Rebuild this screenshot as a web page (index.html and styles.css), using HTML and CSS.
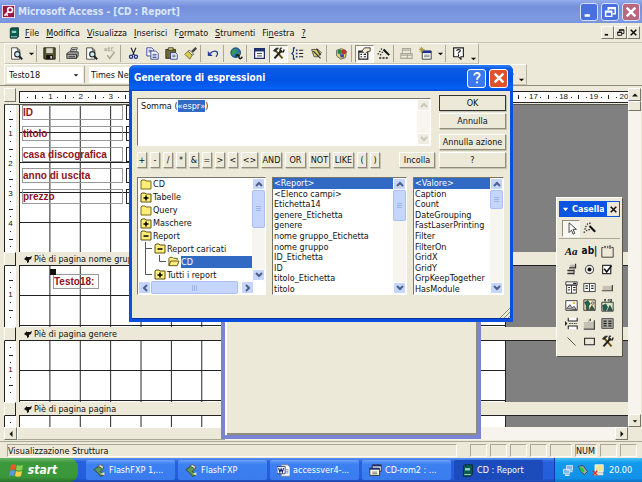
FILE: index.html
```
<!DOCTYPE html>
<html lang="it">
<head>
    <meta charset="UTF-8">
    <meta name="viewport" content="width=device-width, initial-scale=1.0">
    <title>Microsoft Access - [CD : Report]</title>
    <link rel="stylesheet" href="styles.css">
</head>
<body>
    <svg class="sprite" aria-hidden="true">
        <symbol id="i-key" viewBox="0 0 16 16"><rect width="16" height="16" fill="#fff"/><rect x="1" y="1" width="14" height="14" fill="#9c1a42"/><path d="M3 13l5-5M5 11l2 2" stroke="#fff" stroke-width="2"/><circle cx="10" cy="6" r="3" fill="none" stroke="#fff" stroke-width="2"/></symbol>
        <symbol id="i-book" viewBox="0 0 16 16"><path d="M3 2l2-1h9v12l-2 2H3z" fill="#0b5a50" stroke="#032b28"/><path d="M5 5h6v3H5z" fill="#8fd0c0"/><path d="M4 13h8" stroke="#d8e8e0"/></symbol>
        <symbol id="i-preview" viewBox="0 0 16 16"><path d="M2 1h7l3 3v11H2z" fill="#fff" stroke="#333"/><path d="M9 1v3h3" fill="none" stroke="#333"/><circle cx="9" cy="9" r="3.3" fill="#c9ecf2" stroke="#222" stroke-width="1.3"/><path d="M11 11l4 4" stroke="#222" stroke-width="2.4"/></symbol>
        <symbol id="i-save" viewBox="0 0 16 16"><path d="M1 1h14v14H2l-1-1z" fill="#56582e" stroke="#111"/><path d="M4 1.500h8v6H4z" fill="#d8d8c8"/><path d="M4 10h8v5H4z" fill="#111"/><path d="M9 11h2v3H9z" fill="#ddd"/></symbol>
        <symbol id="i-print" viewBox="0 0 16 16"><path d="M5 6l2-5h7l-2 5" fill="#fff" stroke="#222"/><path d="M1 8l3-2h11v5l-2 3H1z" fill="#aaa" stroke="#222"/><path d="M1 9h12v5M3 12h8M7 3h5M6 5h5" fill="none" stroke="#222"/></symbol>
        <symbol id="i-spell" viewBox="0 0 16 16"><path d="M1 5V2h2v3M1 4h2M5 5V1h2l-1 2 1 2H5M12 1h-3v4h3" fill="none" stroke="#aaa79a"/><path d="M4 10l3 4 6-8" fill="none" stroke="#aaa79a" stroke-width="2"/></symbol>
        <symbol id="i-cut" viewBox="0 0 16 16"><path d="M5 1l4 9M11 1L7 10" fill="none" stroke="#222" stroke-width="1.400"/><circle cx="5" cy="12" r="2" fill="none" stroke="#1c2f8c" stroke-width="1.500"/><circle cx="11" cy="12" r="2" fill="none" stroke="#1c2f8c" stroke-width="1.500"/></symbol>
        <symbol id="i-copy" viewBox="0 0 16 16"><path d="M1 1h6l2 2v8H1z" fill="#fff" stroke="#1c2f8c"/><path d="M6 5h6l3 3v7H6z" fill="#fff" stroke="#1c2f8c"/><path d="M3 4h4M3 6h3M8 9h5M8 11h5M8 13h5" stroke="#1c2f8c"/></symbol>
        <symbol id="i-paste" viewBox="0 0 16 16"><path d="M1 3h12v11H1z" fill="#6f6a30" stroke="#222"/><path d="M4 1h6v3H4z" fill="#e8dc80" stroke="#222"/><path d="M7 7h6l2 2v6H7z" fill="#fff" stroke="#1c2f8c"/><path d="M9 10h4M9 12h4" stroke="#1c2f8c"/></symbol>
        <symbol id="i-brush" viewBox="0 0 16 16"><path d="M15 1l-5 5" stroke="#444" stroke-width="3"/><path d="M7 4l5 5-2 1-5-5z" fill="#fff" stroke="#444"/><path d="M5 5l5 5-3 5-6-6z" fill="#d8cc50" stroke="#666020"/></symbol>
        <symbol id="i-undo" viewBox="0 0 16 16"><path d="M4 8c3-4 9-4 9 0 0 2-1 3-2 4" fill="none" stroke="#2a3ea0" stroke-width="1.600"/><path d="M1 5v6h6z" fill="#2a3ea0"/></symbol>
        <symbol id="i-globe" viewBox="0 0 16 16"><circle cx="7" cy="7" r="6" fill="#2878b8" stroke="#123a6a"/><path d="M3 4l4-2 2 3-3 3-2 3-2-4zM9 8l3-1-1 4z" fill="#3a9a4a"/><path d="M7 12c1-3 4-3 4 0s3 3 4 0" fill="none" stroke="#222" stroke-width="2"/></symbol>
        <symbol id="i-fields" viewBox="0 0 16 16"><path d="M2 2h12v12H2z" fill="#fff" stroke="#1c2f6c" stroke-width="1.500"/><path d="M2 4h12" stroke="#1c2f6c" stroke-width="3"/><path d="M5 8h6M5 11h6" stroke="#222"/></symbol>
        <symbol id="i-tools" viewBox="0 0 16 16"><path d="M3 3l10 11" stroke="#6a5010" stroke-width="2.400"/><path d="M12 4L3 14" stroke="#222" stroke-width="2.400"/><path d="M1 5l4-4h4L4 6z" fill="#333"/><path d="M10 2v4h4l1-3M10 2l2-1" fill="none" stroke="#222" stroke-width="1.700"/></symbol>
        <symbol id="i-group" viewBox="0 0 16 16"><path d="M5 1H3v5L1 8l2 2v5h2" fill="none" stroke="#1c2f8c" stroke-width="1.400"/><path d="M6 3h2v2H6zM6 7h2v2H6zM6 11h2v2H6z" fill="#1c2f8c"/><path d="M10 4h5M10 8h5M10 12h5" stroke="#222" stroke-width="1.400"/></symbol>
        <symbol id="i-format" viewBox="0 0 16 16"><path d="M2 3h8l4 4-4 5H5z" fill="#d8cc70" stroke="#444"/><path d="M4 5l6 6M8 2l5 8M8 9l5 5" stroke="#333" stroke-width="1.500"/></symbol>
        <symbol id="i-code" viewBox="0 0 16 16"><path d="M2 4l6-2 6 3-1 8-6 2-5-4z" fill="#e8d060" stroke="#555"/><circle cx="6" cy="6" r="3" fill="#2c8a4a"/><circle cx="11" cy="6" r="3" fill="#c33030"/><path d="M6 9h5v4H7z" fill="#2850b0"/></symbol>
        <symbol id="i-props" viewBox="0 0 16 16"><path d="M1 5h11v10H1z" fill="#fff" stroke="#222" stroke-width="1.500"/><path d="M1 6h8" stroke="#222" stroke-width="2"/><path d="M3 9h2M7 9h3M3 12h2M7 12h3" stroke="#222" stroke-width="1.400"/><path d="M5 5l3-4h7v4l-4 1-2 2" fill="#f2ead0" stroke="#222"/></symbol>
        <symbol id="i-wand" viewBox="0 0 16 16"><path d="M8 5l7 7" stroke="#111" stroke-width="2.600"/><path d="M5 2h1v1H5zM8 1h1v1H8zM3 5h1v1H3zM2 8h1v1H2zM4 10h1v1H4zM7 9h1v1H7zM1 12h1v1H1z" fill="#222" stroke="#222" stroke-width=".6"/></symbol>
        <symbol id="i-wand-dots" viewBox="0 0 16 16"><path d="M8 3l7 7" stroke="#111" stroke-width="2.600"/><path d="M5 2h1v1H5zM3 5h1v1H3zM6 6h1v1H6zM1 8h1v1H1zM4 9h1v1H4zM3 13h2v1H3zM7 13h2v1H7zM11 13h2v1h-2z" fill="#222" stroke="#222" stroke-width=".6"/></symbol>
        <symbol id="i-db" viewBox="0 0 16 16"><path d="M3 2h10v6H3zM1 8h8v6H1zM9 8h6v6H9zM3 4h10M1 10h14" fill="none" stroke="#aaa79a" stroke-width="1.300"/></symbol>
        <symbol id="i-new" viewBox="0 0 16 16"><path d="M4 5h11v10H4z" fill="#fff" stroke="#222"/><path d="M4 6h11" stroke="#1c2f8c" stroke-width="3"/><path d="M6 10h7M6 12h7" stroke="#666"/><path d="M3 0v7M0 3h7M1 1l4 5M5 1L1 6" stroke="#a89020"/></symbol>
        <symbol id="i-help" viewBox="0 0 16 16"><path d="M2 1h12v11h-3v3l-3-3H2z" fill="#fff" stroke="#222" stroke-width="1.400"/><path d="M6 5c0-3 5-2 4 0L8 7v1M8 9v2" fill="none" stroke="#222" stroke-width="1.500"/></symbol>
        <symbol id="i-down" viewBox="0 0 8 8"><path d="M1 3h6L4 6z" fill="#111"/></symbol>
        <symbol id="i-up" viewBox="0 0 8 8"><path d="M0 6h8L4 2z" fill="#111"/></symbol>
        <symbol id="i-left" viewBox="0 0 8 8"><path d="M6 0v8L2 4z" fill="#111"/></symbol>
        <symbol id="i-right" viewBox="0 0 8 8"><path d="M2 0v8l4-4z" fill="#111"/></symbol>
        <symbol id="c-up" viewBox="0 0 8 8"><path d="M1 6l3-3 3 3" fill="none" stroke="currentColor" stroke-width="2"/></symbol>
        <symbol id="c-down" viewBox="0 0 8 8"><path d="M1 2l3 3 3-3" fill="none" stroke="currentColor" stroke-width="2"/></symbol>
        <symbol id="c-left" viewBox="0 0 8 8"><path d="M6 1L3 4l3 3" fill="none" stroke="currentColor" stroke-width="2"/></symbol>
        <symbol id="c-right" viewBox="0 0 8 8"><path d="M2 1l3 3-3 3" fill="none" stroke="currentColor" stroke-width="2"/></symbol>
        <symbol id="w-min" viewBox="0 0 16 16"><path d="M3 12h6" stroke="currentColor" stroke-width="3"/></symbol>
        <symbol id="w-max" viewBox="0 0 16 16"><path d="M6 6V3h8v7h-3M6 4h8" fill="none" stroke="currentColor" stroke-width="1.700"/><path d="M3 7h7v6H3zM3 8h7" fill="none" stroke="currentColor" stroke-width="1.700"/></symbol>
        <symbol id="w-close" viewBox="0 0 16 16"><path d="M3 3l10 10M13 3L3 13" stroke="currentColor" stroke-width="2.800"/></symbol>
        <symbol id="i-section" viewBox="0 0 8 8"><path d="M0 4l3-3v1h3l2-1-1 3-2 1v2l-2 1V6z" fill="#111"/></symbol>
        <symbol id="f-closed" viewBox="0 0 12 11"><path d="M1 2l1-1h3l1 1h5v8H1z" fill="#ffef7a" stroke="#7a6a10"/></symbol>
        <symbol id="f-plus" viewBox="0 0 12 11"><path d="M1 2l1-1h3l1 1h5v8H1z" fill="#ffef7a" stroke="#5a5010"/><path d="M6 3.500v5M3.500 6h5" stroke="#000" stroke-width="1.500"/></symbol>
        <symbol id="f-minus" viewBox="0 0 12 11"><path d="M1 2l1-1h3l1 1h5v8H1z" fill="#ffef7a" stroke="#5a5010"/><path d="M3.500 6h5" stroke="#000" stroke-width="1.500"/></symbol>
        <symbol id="f-open" viewBox="0 0 13 11"><path d="M1 10V2l1-1h3l1 1h4v2M1 10l2-5h9l-2 5z" fill="#ffef7a" stroke="#5a5010"/></symbol>
        <symbol id="t-tee" viewBox="0 0 14 13"><path d="M5.500 0v13M5.500 6.500H12" fill="none" stroke="#555"/></symbol>
        <symbol id="t-line" viewBox="0 0 14 13"><path d="M5.500 0v13" stroke="#555"/></symbol>
        <symbol id="t-corner" viewBox="0 0 14 13"><path d="M5.500 0v6.500H12" fill="none" stroke="#555"/></symbol>
        <symbol id="i-fxp" viewBox="0 0 16 16"><circle cx="9" cy="5" r="4" fill="#d9ead0" stroke="#445"/><path d="M1 7l6-4 5 3-3 3 4 5-4 1-4-5z" fill="#5d9a52" stroke="#2c3d2c"/><path d="M9 12l5-2v4z" fill="#e8e0b0"/></symbol>
        <symbol id="i-word" viewBox="0 0 16 16"><path d="M5 1h8l3 3v11H5z" fill="#fff" stroke="#778"/><path d="M0 3h10v9H0z" fill="#fff" stroke="#182a7a"/><path d="M2 5l1.500 5L5 6l1.500 4L8 5" fill="none" stroke="#182a7a" stroke-width="1.500"/><path d="M11 7h3M11 9h3M11 11h3" stroke="#778"/></symbol>
        <symbol id="i-forms" viewBox="0 0 16 16"><path d="M4 1h11v8H4z" fill="#fff" stroke="#222"/><path d="M4 2h11" stroke="#182a7a" stroke-width="2"/><path d="M1 5h12v9H1z" fill="#f8f5e4" stroke="#222"/><path d="M1 6h12" stroke="#182a7a" stroke-width="2"/><path d="M4 10h6M4 12h6" stroke="#666"/></symbol>
    </svg>

    <div class="app">
        <header class="titlebar">
            <svg class="icon"><use href="#i-key"/></svg>
            <h1>Microsoft Access - [CD : Report]</h1>
            <div class="window-buttons">
                <button class="xp-button" aria-label="Riduci a icona"><svg><use href="#w-min"/></svg></button>
                <button class="xp-button" aria-label="Ripristina"><svg><use href="#w-max"/></svg></button>
                <button class="xp-button close" aria-label="Chiudi"><svg><use href="#w-close"/></svg></button>
            </div>
        </header>

        <nav class="menubar">
            <svg class="icon"><use href="#i-book"/></svg>
            <button><u>F</u>ile</button>
            <button><u>M</u>odifica</button>
            <button><u>V</u>isualizza</button>
            <button><u>I</u>nserisci</button>
            <button>F<u>o</u>rmato</button>
            <button><u>S</u>trumenti</button>
            <button>Fi<u>n</u>estra</button>
            <button><u>?</u></button>
            <div class="child-buttons">
                <button aria-label="Riduci finestra"><svg><use href="#w-min"/></svg></button>
                <button aria-label="Ripristina finestra"><svg><use href="#w-max"/></svg></button>
                <button aria-label="Chiudi finestra"><svg><use href="#w-close"/></svg></button>
            </div>
        </nav>

        <div class="toolbar">
            <div class="band">
                <button class="tool" aria-label="Visualizza"><svg><use href="#i-preview"/></svg></button>
                <button class="tool-arrow" aria-label="Altre visualizzazioni"><svg><use href="#i-down"/></svg></button>
                <span class="sep"></span>
                <button class="tool" aria-label="Salva"><svg><use href="#i-save"/></svg></button>
                <span class="sep"></span>
                <button class="tool" aria-label="Stampa"><svg><use href="#i-print"/></svg></button>
                <button class="tool" aria-label="Anteprima"><svg><use href="#i-preview"/></svg></button>
                <button class="tool" aria-label="Controllo ortografia"><svg><use href="#i-spell"/></svg></button>
                <span class="sep"></span>
                <button class="tool" aria-label="Taglia"><svg><use href="#i-cut"/></svg></button>
                <button class="tool" aria-label="Copia"><svg><use href="#i-copy"/></svg></button>
                <button class="tool" aria-label="Incolla appunti"><svg><use href="#i-paste"/></svg></button>
                <button class="tool" aria-label="Copia formato"><svg><use href="#i-brush"/></svg></button>
                <span class="sep"></span>
                <button class="tool" aria-label="Annulla modifica"><svg><use href="#i-undo"/></svg></button>
                <span class="sep"></span>
                <button class="tool" aria-label="Collegamento"><svg><use href="#i-globe"/></svg></button>
                <span class="sep"></span>
                <button class="tool" aria-label="Elenco campi"><svg><use href="#i-fields"/></svg></button>
                <button class="tool pressed" aria-label="Casella degli strumenti"><svg><use href="#i-tools"/></svg></button>
                <button class="tool" aria-label="Ordina e raggruppa"><svg><use href="#i-group"/></svg></button>
                <button class="tool" aria-label="Formattazione automatica"><svg><use href="#i-format"/></svg></button>
                <span class="sep wide"></span>
                <button class="tool" aria-label="Codice"><svg><use href="#i-code"/></svg></button>
                <span class="sep"></span>
                <button class="tool pressed" aria-label="Proprietà"><svg><use href="#i-props"/></svg></button>
                <button class="tool" aria-label="Genera"><svg><use href="#i-wand-dots"/></svg></button>
                <span class="sep"></span>
                <button class="tool" aria-label="Finestra database"><svg><use href="#i-db"/></svg></button>
                <button class="tool" aria-label="Nuovo oggetto"><svg><use href="#i-new"/></svg></button>
                <button class="tool-arrow" aria-label="Altri oggetti"><svg><use href="#i-down"/></svg></button>
                <span class="sep"></span>
                <button class="tool" aria-label="Guida"><svg><use href="#i-help"/></svg></button>
                <button class="tool-arrow low" aria-label="Opzioni barra"><svg><use href="#i-down"/></svg></button>
            </div>
        </div>

        <div class="toolbar">
            <div class="band format-band">
                <span class="combo"><select aria-label="Oggetto"><option>Testo18</option></select><svg><use href="#i-down"/></svg></span>
                <span class="sep"></span>
                <span class="combo font"><select aria-label="Tipo di carattere"><option>Times New Roman</option></select><svg><use href="#i-down"/></svg></span>
                <button class="tool-arrow push" aria-label="Effetto"><svg><use href="#i-down"/></svg></button>
                <button class="tool-arrow low" aria-label="Opzioni formato"><svg><use href="#i-down"/></svg></button>
            </div>
        </div>

        <main class="report">
            <div class="design">
                <div class="ruler-row">
                    <div class="corner"></div>
                    <div class="ruler" data-units="20"></div>
                </div>
                <div class="section first">
                    <div class="v-ruler" data-units="4"></div>
                    <div class="canvas">
                        <div class="page">
                            <div class="fields">
                                <div class="field"><span>ID</span><span></span></div>
                                <div class="field"><span>titolo</span><span></span></div>
                                <div class="field"><span>casa discografica</span><span></span></div>
                                <div class="field"><span>anno di uscita</span><span></span></div>
                                <div class="field"><span>prezzo</span><span></span></div>
                            </div>
                        </div>
                    </div>
                </div>
                <div class="section-bar"><i></i><h2><svg><use href="#i-section"/></svg>Piè di pagina nome gruppo</h2></div>
                <div class="section">
                    <div class="v-ruler" data-units="1"></div>
                    <div class="canvas">
                        <div class="page"><span class="new-field">Testo18:</span></div>
                    </div>
                </div>
                <div class="section-bar"><i></i><h2><svg><use href="#i-section"/></svg>Piè di pagina genere</h2></div>
                <div class="section">
                    <div class="v-ruler" data-units="1"></div>
                    <div class="canvas"><div class="page"></div></div>
                </div>
                <div class="section-bar"><i></i><h2><svg><use href="#i-section"/></svg>Piè di pagina pagina</h2></div>
                <div class="section last">
                    <div class="v-ruler" data-units="0"></div>
                    <div class="canvas"><div class="page"></div></div>
                </div>
                <div class="h-scroll">
                    <button aria-label="Scorri a sinistra"><svg><use href="#i-left"/></svg></button>
                    <span></span>
                    <button aria-label="Scorri a destra"><svg><use href="#i-right"/></svg></button>
                </div>
            </div>
            <div class="v-scroll">
                <button aria-label="Scorri in alto"><svg><use href="#i-up"/></svg></button>
                <span></span>
                <button aria-label="Scorri in basso"><svg><use href="#i-down"/></svg></button>
            </div>
        </main>

        <footer class="statusbar">
            <span class="message">Visualizzazione Struttura</span>
            <span class="pane"></span>
            <span class="pane"></span>
            <span class="pane"></span>
            <span class="pane"></span>
            <span class="pane num"></span>
            <span class="pane num">NUM</span>
            <span class="pane"></span>
            <span class="pane"></span>
        </footer>

        <div class="taskbar">
            <button class="start">
                <svg viewBox="0 0 16 16"><path d="M2 3c2-1 4-1 5 0L6 8c-1-1-3-1-5 0z" fill="#f0562a"/><path d="M8 3c2 1 4 1 6 0l-1 5c-2 1-4 1-6 0z" fill="#8cd050"/><path d="M1 9c2-1 4-1 5 0l-1 5c-1-1-3-1-5 0z" fill="#5a96f0"/><path d="M7 9c2 1 4 1 6 0l-1 5c-2 1-4 1-6 0z" fill="#fbd040"/></svg>
                start
            </button>
            <div class="tasks">
                <button><svg><use href="#i-fxp"/></svg>FlashFXP 1,...</button>
                <button><svg><use href="#i-fxp"/></svg>FlashFXP</button>
                <button><svg><use href="#i-word"/></svg>accessver4-...</button>
                <button><svg><use href="#i-forms"/></svg>CD-rom2 : ...</button>
                <button class="active"><svg><use href="#i-book"/></svg>CD : Report</button>
            </div>
            <div class="tray">
                <svg viewBox="0 0 16 16"><path d="M6 2h8v6H6zM2 7h8v6H2z" fill="#7fb8f4" stroke="#e4efff"/><path d="M4 15h6M11 10h3" stroke="#dfe8f8" stroke-width="2"/></svg>
                <svg viewBox="0 0 16 16"><path d="M2 3l6-1 6 8-4 4-5-4z" fill="#9aa8a8" stroke="#334"/><path d="M3 4l5 1 2 5-4 1z" fill="#2fc43a"/></svg>
                <svg viewBox="0 0 16 16"><path d="M4 1h11v9H4z" fill="#f6e49a" stroke="#fff"/><path d="M2 11h13v4H2z" fill="#e8e0c8"/><path d="M1 9l6 6M7 9l-6 6" stroke="#e03020" stroke-width="2"/></svg>
                <time>20.00</time>
            </div>
        </div>
    </div>

    <div class="back-window"></div>

    <div class="dialog" role="dialog" aria-labelledby="dialog-title">
        <div class="dialog-title">
            <h2 id="dialog-title">Generatore di espressioni</h2>
            <button class="xp-button" aria-label="Guida rapida"><svg viewBox="0 0 16 16"><path d="M5 5c0-4 7-3 6 0-.5 2-3 2-3 5M8 12v2" fill="none" stroke="#fff" stroke-width="2.200"/></svg></button>
            <button class="xp-button close" aria-label="Chiudi generatore"><svg><use href="#w-close"/></svg></button>
        </div>
        <div class="dialog-body">
            <div class="builder">
                <div class="editor">
                    <div class="expression">
                        <textarea id="expression" aria-label="Espressione" spellcheck="false">Somma («espr»)</textarea>
                        <div class="scroll disabled">
                            <button aria-label="Su" disabled><svg><use href="#c-up"/></svg></button>
                            <button aria-label="Giù" disabled><svg><use href="#c-down"/></svg></button>
                        </div>
                    </div>
                    <div class="operators">
                        <button>+</button>
                        <button>-</button>
                        <button>/</button>
                        <button>*</button>
                        <button>&amp;</button>
                        <button>=</button>
                        <button>&gt;</button>
                        <button>&lt;</button>
                        <button class="pair">&lt;&gt;</button>
                        <button class="word">AND</button>
                        <button class="word">OR</button>
                        <button class="word">NOT</button>
                        <button class="word">LIKE</button>
                        <button>(</button>
                        <button>)</button>
                        <button class="paste">Incolla</button>
                    </div>
                </div>
                <div class="commands">
                    <button class="default">OK</button>
                    <button>Annulla</button>
                    <button class="spaced">Annulla azione</button>
                    <button>?</button>
                </div>
            </div>

            <div class="lists">
                <div class="list tree-list">
                    <div class="list-main">
                        <ul class="tree" role="tree">
                            <li role="treeitem"><svg><use href="#f-closed"/></svg><span>CD</span></li>
                            <li role="treeitem"><svg><use href="#f-plus"/></svg><span>Tabelle</span></li>
                            <li role="treeitem"><svg><use href="#f-closed"/></svg><span>Query</span></li>
                            <li role="treeitem"><svg><use href="#f-plus"/></svg><span>Maschere</span></li>
                            <li role="treeitem"><svg><use href="#f-minus"/></svg><span>Report</span></li>
                            <li role="treeitem"><svg class="branch"><use href="#t-tee"/></svg><svg><use href="#f-minus"/></svg><span>Report caricati</span></li>
                            <li role="treeitem" aria-selected="true"><svg class="branch"><use href="#t-line"/></svg><svg class="branch"><use href="#t-corner"/></svg><svg><use href="#f-open"/></svg><span class="selected">CD</span></li>
                            <li role="treeitem"><svg class="branch"><use href="#t-corner"/></svg><svg><use href="#f-plus"/></svg><span>Tutti i report</span></li>
                        </ul>
                        <div class="scroll">
                            <button aria-label="Su"><svg><use href="#c-up"/></svg></button>
                            <i class="thumb long"></i>
                            <button aria-label="Giù"><svg><use href="#c-down"/></svg></button>
                        </div>
                    </div>
                    <div class="scroll horizontal">
                        <button aria-label="Sinistra"><svg><use href="#c-left"/></svg></button>
                        <i class="thumb"></i>
                        <button aria-label="Destra"><svg><use href="#c-right"/></svg></button>
                    </div>
                </div>
                <div class="list items-list">
                    <ul role="listbox" aria-label="Elementi">
                        <li role="option" class="selected">&lt;Report&gt;</li>
                        <li role="option">&lt;Elenco campi&gt;</li>
                        <li role="option">Etichetta14</li>
                        <li role="option">genere_Etichetta</li>
                        <li role="option">genere</li>
                        <li role="option">nome gruppo_Etichetta</li>
                        <li role="option">nome gruppo</li>
                        <li role="option">ID_Etichetta</li>
                        <li role="option">ID</li>
                        <li role="option">titolo_Etichetta</li>
                        <li role="option">titolo</li>
                    </ul>
                    <div class="scroll">
                        <button aria-label="Su"><svg><use href="#c-up"/></svg></button>
                        <i class="thumb medium"></i>
                        <button aria-label="Giù"><svg><use href="#c-down"/></svg></button>
                    </div>
                </div>
                <div class="list values-list">
                    <ul role="listbox" aria-label="Valori">
                        <li role="option" class="selected">&lt;Valore&gt;</li>
                        <li role="option">Caption</li>
                        <li role="option">Count</li>
                        <li role="option">DateGrouping</li>
                        <li role="option">FastLaserPrinting</li>
                        <li role="option">Filter</li>
                        <li role="option">FilterOn</li>
                        <li role="option">GridX</li>
                        <li role="option">GridY</li>
                        <li role="option">GrpKeepTogether</li>
                        <li role="option">HasModule</li>
                    </ul>
                    <div class="scroll">
                        <button aria-label="Su"><svg><use href="#c-up"/></svg></button>
                        <i class="thumb"></i>
                        <button aria-label="Giù"><svg><use href="#c-down"/></svg></button>
                    </div>
                </div>
            </div>
            <svg class="grip" viewBox="0 0 10 10"><path d="M0 10L10 0M4 10l6-6M8 10l2-2" stroke="#8f8c7c"/></svg>
        </div>
    </div>

    <div class="toolbox">
        <div class="toolbox-title">
            <svg viewBox="0 0 8 8"><path d="M1 2h6L4 6z" fill="#fff"/></svg>
            <h2>Casella degli strumenti</h2>
            <button aria-label="Chiudi casella"><svg><use href="#w-close"/></svg></button>
        </div>
        <div class="toolbox-modes">
            <button class="pressed" aria-label="Seleziona oggetti"><svg viewBox="0 0 16 16"><path d="M5 1v12l3-3 2 5 2-1-2-5h4z" fill="#fff" stroke="#222"/></svg></button>
            <button aria-label="Creazioni guidate"><svg><use href="#i-wand"/></svg></button>
        </div>
        <div class="toolbox-grid">
            <button class="glyph serif">Aa</button>
            <button class="glyph">ab|</button>
            <button aria-label="Gruppo di opzioni"><svg viewBox="0 0 16 16"><path d="M3 3H1v12h14V3h-2" fill="none" stroke="#222"/><path d="M4 1l2 3M6 1L4 4M8 1v3M10 1v3h2V1h-2" fill="none" stroke="#222" stroke-width=".8"/></svg></button>
            <button aria-label="Interruttore"><svg viewBox="0 0 16 16"><path d="M6 2h7v4H6zM3 9h7v4H3z" fill="#b8b5a6"/><path d="M13 1v5H5M11 8v6M3 9h9M3 13h8" fill="none" stroke="#333" stroke-width="1.500"/></svg></button>
            <button aria-label="Pulsante di opzione"><svg viewBox="0 0 16 16"><circle cx="8" cy="8" r="5" fill="#fff" stroke="#555" stroke-width="1.500"/><circle cx="8" cy="8" r="2.500" fill="#111"/></svg></button>
            <button aria-label="Casella di controllo"><svg viewBox="0 0 16 16"><path d="M2 3h10v10H2z" fill="#fff" stroke="#333" stroke-width="1.500"/><path d="M4 7l3 4 6-8" fill="none" stroke="#111" stroke-width="2"/></svg></button>
            <button aria-label="Casella combinata"><svg viewBox="0 0 16 16"><path d="M1 1h14v4H1zM2 5h12v10H2zM8 5v10" fill="#fff" stroke="#222"/><path d="M4 8h2M4 11h2M10 8h3M10 11h3M10 3h4" stroke="#222" stroke-width="1.500"/></svg></button>
            <button aria-label="Casella di riepilogo"><svg viewBox="0 0 16 16"><path d="M1 3h14v10H1zM8 3v10" fill="#fff" stroke="#222"/><path d="M3 6h3M3 9h3M10 6h3M10 9h3" stroke="#222" stroke-width="1.500"/></svg></button>
            <button aria-label="Pulsante di comando"><svg viewBox="0 0 16 16"><path d="M2 6h12v5H2z" fill="#c4c1b2"/><path d="M14 5v7H1" fill="none" stroke="#444" stroke-width="1.500"/></svg></button>
            <button aria-label="Immagine"><svg viewBox="0 0 16 16"><path d="M1 2h14v12H1z" fill="#fff" stroke="#222"/><path d="M2 12l4-5 3 4 2-2 3 4z" fill="#bbb" stroke="#333"/><circle cx="11" cy="5" r="1.500" fill="#ddc43a"/></svg></button>
            <button aria-label="Cornice oggetto non associato"><svg viewBox="0 0 16 16"><path d="M1 1h14v13H1z" fill="#eee8b8" stroke="#222"/><path d="M2 4l4-2 3 4-2 2v5H4V8zM8 13l3-5 3 5z" fill="#1c6658" stroke="#222" stroke-width=".7"/><circle cx="12" cy="5" r="1.500" fill="#fff" stroke="#444"/></svg></button>
            <button aria-label="Cornice oggetto associato"><svg viewBox="0 0 16 16"><path d="M1 4h14v11H1z" fill="#d8e4c8" stroke="#222"/><path d="M4 0l2 3M6 0L4 3M9 0v3M11 0h2v3h-2z" stroke="#222" fill="none"/><path d="M2 8l4-2 2 4-2 4H3zM8 14l3-6 3 6z" fill="#1c6658" stroke="#222" stroke-width=".7"/></svg></button>
            <button aria-label="Interruzione di pagina"><svg viewBox="0 0 16 16"><path d="M4 1v4h11V1M4 15v-4h11v4" fill="#fff" stroke="#222" stroke-width="1.300"/><path d="M5 8h10" stroke="#222" stroke-dasharray="2 1"/><path d="M0 5v6l3-3z" fill="#222"/></svg></button>
            <button aria-label="Struttura a schede"><svg viewBox="0 0 16 16"><path d="M1 6h5V3h3v3h5v8H1z" fill="#c4c1b2"/><path d="M14 4v11H1M9 2v3" fill="none" stroke="#444" stroke-width="1.500"/></svg></button>
            <button aria-label="Sottoreport"><svg viewBox="0 0 16 16"><path d="M1 2h14v12H1z" fill="#b0b0a8" stroke="#333"/><path d="M3 5h4M3 8h4M3 11h4M9 5h4M9 8h4M9 11h4" stroke="#222" stroke-width="1.600"/></svg></button>
            <button aria-label="Linea"><svg viewBox="0 0 16 16"><path d="M3 3l10 10" stroke="#333"/></svg></button>
            <button aria-label="Rettangolo"><svg viewBox="0 0 16 16"><path d="M2 4h12v8H2z" fill="none" stroke="#222" stroke-width="1.300"/></svg></button>
            <button aria-label="Altri controlli"><svg><use href="#i-tools"/></svg></button>
        </div>
    </div>

    <script>
        // Tacche dei righelli: tre segni e poi il numero, alla fine solo i segni
        const ticks = '<i class="dot"></i><i class="tick"></i><i class="dot"></i>';

        document.querySelectorAll('[data-units]').forEach(ruler => {
            const units = Number(ruler.dataset.units);
            for (let i = 1; i <= units + 1; i++) {
                const unit = document.createElement('div');
                unit.className = 'unit';
                unit.innerHTML = ticks + (i <= units ? '<b>' + i + '</b>' : '<b></b>');
                ruler.appendChild(unit);
            }
        });

        const expression = document.getElementById('expression');
        expression.focus();
        expression.setSelectionRange(7, 13);
    </script>
</body>
</html>
```
FILE: styles.css
```
* {
    box-sizing: border-box;
}

body {
    margin: 0;
    height: 100vh;
    overflow: hidden;
    position: relative;
    background: #ece9d8;
    color: #111;
    font-family: "DejaVu Sans Condensed", "DejaVu Sans", sans-serif;
    font-size: 9px;
    line-height: 12px;
}

h1, h2, ul {
    margin: 0;
    padding: 0;
    font-size: inherit;
    font-weight: normal;
    list-style: none;
}

button, select, textarea {
    font: inherit;
    color: inherit;
    margin: 0;
    padding: 0;
    border: 0;
    border-radius: 0;
    background: none;
}

button {
    display: flex;
    align-items: center;
    justify-content: center;
    flex: none;
    white-space: nowrap;
}

svg {
    flex: none;
    display: block;
}

.sprite {
    position: absolute;
    width: 0;
    height: 0;
}

.app {
    display: flex;
    flex-direction: column;
    height: 100%;
}

/* Title bar */
.titlebar {
    display: flex;
    align-items: center;
    flex: none;
    height: 23px;
    padding: 0 2px;
    gap: 3px;
    background: linear-gradient(#93aceb, #7590dc 30%, #7f9ae3 80%, #7894dd);
    color: #dce6fb;
}

.titlebar .icon {
    width: 13px;
    height: 13px;
}

.titlebar h1 {
    flex: 1;
    font-size: 10px;
    font-weight: bold;
}

.window-buttons {
    display: flex;
    gap: 3px;
}

.xp-button {
    width: 18px;
    height: 18px;
    border: 1px solid #d5e0fa;
    border-radius: 3px;
    background: #4a6fe0;
    color: #fff;
}

.xp-button svg {
    width: 14px;
    height: 14px;
}

.xp-button.close {
    background: #b9677c;
}

/* Menu and toolbars */
.menubar {
    display: flex;
    align-items: center;
    flex: none;
    height: 20px;
    padding: 0 2px 0 8px;
    gap: 7px;
    border-bottom: 1px solid #c9c5b4;
}

.menubar .icon {
    width: 12px;
    height: 12px;
    margin-right: -2px;
}

.child-buttons {
    display: flex;
    margin-left: auto;
}

.child-buttons button {
    width: 13px;
    height: 13px;
    border: 1px solid;
    border-color: #fff #77756a #77756a #fff;
}

.child-buttons svg {
    width: 9px;
    height: 9px;
}

.toolbar {
    flex: none;
    height: 21px;
    padding-left: 4px;
}

.band {
    display: inline-flex;
    align-items: center;
    height: 21px;
    padding-left: 2px;
    border: 1px solid;
    border-color: #fff #b5b2a2 #c9c5b4 #fff;
}

.tool {
    width: 19px;
    height: 18px;
}

.tool svg {
    width: 13px;
    height: 13px;
}

.tool-arrow {
    width: 10px;
    height: 18px;
}

.tool-arrow svg {
    width: 7px;
    height: 7px;
}

.tool-arrow.low {
    align-items: flex-end;
    padding-bottom: 1px;
}

.tool-arrow.push {
    margin-left: auto;
}

.pressed {
    background: #f8f7f1;
    border: 1px solid;
    border-color: #8f8c7c #fff #fff #8f8c7c;
}

.sep {
    width: 4px;
    height: 17px;
    border-left: 1px solid #aca899;
    border-right: 2px solid transparent;
}

.sep.wide {
    width: 6px;
}

.format-band {
    width: 82%;
}

.combo {
    display: flex;
    align-items: center;
    width: 76px;
    height: 16px;
    padding-right: 4px;
    background: #fff;
}

.combo.font {
    width: 110px;
}

.combo select {
    flex: 1;
    min-width: 0;
    padding-left: 2px;
    appearance: none;
    outline: 0;
}

.combo svg {
    width: 6px;
    height: 6px;
}

.format-band .sep {
    margin: 0 1px;
}

/* Report design area */
.report {
    display: flex;
    flex: 1;
    min-height: 0;
    padding: 2px 1px 1px 4px;
    border-top: 1px solid #8f8c7c;
}

.design {
    display: flex;
    flex-direction: column;
    flex: 1;
    min-width: 0;
}

.ruler-row {
    display: flex;
    flex: none;
    height: 17px;
    gap: 3px;
    border-bottom: 1px solid #55534a;
}

.corner {
    width: 12px;
    height: 14px;
    border: 1px solid;
    border-color: #fff #77756a #77756a #fff;
}

.ruler {
    display: flex;
    flex: 1;
    height: 12px;
    margin-top: 3px;
    padding-left: 4px;
    overflow: hidden;
    border: solid #222;
    border-width: 1px 0 1px 1px;
    background: #fff;
    font: 8px/10px "Liberation Sans", Arial, sans-serif;
}

.unit {
    display: flex;
    align-items: center;
    flex: 0 0 5%;
}

.unit > * {
    display: flex;
    flex: 1 1 0;
    align-items: center;
    justify-content: center;
    width: 0;
    font-weight: normal;
}

.unit .dot::before,
.unit .tick::before {
    content: "";
    width: 1px;
    height: 1px;
    background: #222;
}

.unit .tick::before {
    height: 4px;
}

.section {
    display: flex;
    flex: none;
    gap: 3px;
    height: 61px;
}

.section.first {
    height: 147px;
}

.section.last {
    flex: 1;
    height: auto;
    min-height: 0;
}

.v-ruler {
    width: 12px;
    padding-top: 3px;
    overflow: hidden;
    border-left: 1px solid #222;
    background: #fff;
    font: 8px/8px "Liberation Sans", Arial, sans-serif;
}

.v-ruler .unit {
    flex-direction: column;
    height: 30px;
}

.v-ruler .unit > * {
    width: auto;
    min-height: 0;
}

.v-ruler .tick::before {
    width: 4px;
    height: 1px;
}

.canvas {
    flex: 1;
    min-width: 0;
    background: #808080;
    border-left: 1px solid #222;
}

/* One grid square is a sixteenth of the page */
.page {
    width: 80%;
    height: 100%;
    background-color: #fff;
    background-image:
        linear-gradient(to left, #222 1px, transparent 1px),
        linear-gradient(to top, #222 1px, transparent 1px);
    background-size: calc(100% / 16) 30px;
}

.first .page {
    background-position: 0 -2px;
}

.fields {
    display: flex;
    flex-direction: column;
    gap: 6px;
    padding-left: 2px;
}

.field {
    display: flex;
    gap: 3px;
}

.field span,
.new-field {
    width: 101px;
    height: 15px;
    border: 1px solid #999;
    color: #8e1220;
    font: bold 10px/13px "Liberation Sans", Arial, sans-serif;
}

.field span + span {
    border-color: #222;
}

.new-field {
    display: block;
    position: relative;
    left: 33px;
    top: 8px;
    width: 46px;
}

.new-field::before {
    content: "";
    position: absolute;
    left: -4px;
    top: -6px;
    width: 6px;
    height: 6px;
    background: #111;
}

.section-bar {
    display: flex;
    flex: none;
    gap: 3px;
    height: 14px;
}

.section-bar i {
    width: 12px;
    border: 1px solid;
    border-color: #fff #222 #222 #fff;
}

.section-bar h2 {
    display: flex;
    align-items: center;
    flex: 1;
    gap: 2px;
    padding-left: 5px;
    border-bottom: 1px solid #222;
}

.section-bar svg {
    width: 8px;
    height: 8px;
}

.h-scroll,
.v-scroll {
    display: flex;
    flex: none;
    background: #f6f4ec;
}

.h-scroll {
    height: 13px;
}

.h-scroll span {
    width: 208px;
    margin-right: auto;
    border: 1px solid;
    border-color: #fff #aca899 #aca899 #fff;
    background: #ece9d8;
}

.v-scroll {
    flex-direction: column;
    width: 13px;
    margin-bottom: 13px;
}

.v-scroll span {
    height: 10px;
    margin-bottom: auto;
    border: 1px solid;
    border-color: #fff #77756a #77756a #fff;
    background: #ece9d8;
}

.h-scroll button,
.v-scroll button {
    width: 13px;
    height: 13px;
    border: 1px solid;
    border-color: #fff #77756a #77756a #fff;
    background: #ece9d8;
}

.h-scroll svg,
.v-scroll svg {
    width: 6px;
    height: 6px;
}

/* Status bar */
.statusbar {
    display: flex;
    align-items: center;
    flex: none;
    height: 17px;
    gap: 3px;
    padding: 0 5px 0 7px;
    border-top: 1px solid #aca899;
}

.message,
.pane {
    height: 13px;
    border: 1px solid;
    border-color: #aca899 #fff #fff #aca899;
}

.message {
    flex: 1;
    margin-right: 10px;
}

.pane {
    width: 17px;
}

.pane.num {
    width: 22px;
}

/* Task bar */
.taskbar {
    display: flex;
    flex: none;
    height: 24px;
    background: linear-gradient(#5b95f5, #2761dc 15%, #245ddb 85%, #1b46a8);
    color: #fff;
}

.start {
    width: 78px;
    gap: 3px;
    padding-right: 12px;
    border-radius: 0 9px 9px 0;
    background: linear-gradient(#6cb566, #3b983b 20%, #3a973a 80%, #2a702a);
    font: italic bold 12px/18px "DejaVu Sans Condensed", sans-serif;
}

.start svg {
    width: 16px;
    height: 16px;
}

.tasks {
    display: flex;
    flex: 1;
    gap: 3px;
    padding: 2px 11px 2px 8px;
}

.tasks button {
    flex: 1 1 0;
    min-width: 0;
    justify-content: flex-start;
    gap: 3px;
    padding-left: 7px;
    border-radius: 2px;
    background: linear-gradient(#6ba2fb, #3c81f3 20%, #3a7bee);
}

.tasks svg {
    width: 13px;
    height: 13px;
}

.tasks .active {
    background: #1c4bbb;
}

.tray {
    display: flex;
    align-items: center;
    width: 88px;
    gap: 3px;
    padding-left: 7px;
    border-left: 1px solid #0a3fa0;
    background: linear-gradient(#45c1f5, #129bec 20%, #1290e8 85%, #0f70c0);
}

.tray svg {
    width: 12px;
    height: 12px;
}

.tray time {
    margin-left: 2px;
}

/* Window left behind the dialog */
.back-window {
    position: absolute;
    left: 221px;
    top: 200px;
    width: 260px;
    height: 239px;
    border: 4px solid #7b84d2;
    border-top: 0;
    background: #ece9d8;
    box-shadow: inset 2px 0 #fff, inset -1px -2px #8f8c7c;
}

/* Expression builder */
.dialog {
    position: absolute;
    left: 129px;
    top: 65px;
    width: 384px;
    border: 3px solid #0a4fe0;
    border-top: 0;
    border-radius: 6px 6px 0 0;
    background: #ece9d8;
    box-shadow: inset 0 -1px #0831a0;
}

.dialog-title {
    display: flex;
    align-items: center;
    height: 26px;
    margin: 0 -3px;
    padding: 0 5px 0 5px;
    gap: 3px;
    border-radius: 6px 6px 0 0;
    background: linear-gradient(#2f80f8, #0a5ae6 15%, #0054e3 60%, #0561f5 90%, #0048cc);
    color: #fff;
}

.dialog-title h2 {
    flex: 1;
    font-size: 10px;
    font-weight: bold;
}

.dialog-title .xp-button {
    width: 19px;
    height: 19px;
    border-color: #fff;
    background: #3c78ee;
}

.dialog-title .close {
    background: #e2512c;
}

.dialog-body {
    position: relative;
    padding: 4px 4px 24px 5px;
}

.builder {
    display: flex;
    justify-content: space-between;
}

.editor {
    display: flex;
    flex-direction: column;
    justify-content: space-between;
    width: 298px;
    padding-top: 3px;
}

.expression {
    display: flex;
    width: 294px;
    height: 48px;
}

.expression,
.list {
    border: 1px solid;
    border-color: #77756a #fff #fff #77756a;
    background: #fff;
}

.expression textarea {
    flex: 1;
    padding: 1px 3px;
    outline: 0;
    resize: none;
    overflow: hidden;
}

.expression textarea::selection {
    background: #316ac5;
    color: #fff;
}

.operators {
    display: flex;
    gap: 3px;
}

.operators button,
.commands button {
    height: 16px;
    border: 1px solid;
    border-color: #fff #8f8c7c #8f8c7c #fff;
    box-shadow: 1px 1px #c5c2b2;
}

.operators button {
    width: 10px;
}

.operators .pair {
    width: 17px;
}

.operators .word {
    width: 21px;
}

.operators .paste {
    width: 36px;
    margin-left: auto;
}

.commands {
    display: flex;
    flex-direction: column;
    gap: 2px;
    width: 67px;
}

.commands .default {
    border: 1px solid #333;
}

.commands .spaced {
    margin-top: 3px;
}

.lists {
    display: flex;
    gap: 6px;
    margin-top: 9px;
}

.list {
    display: flex;
    height: 118px;
}

.tree-list {
    flex-direction: column;
    width: 129px;
}

.items-list {
    width: 135px;
}

.values-list {
    width: 91px;
}

.list-main {
    display: flex;
    flex: 1;
}

.list ul {
    display: flex;
    flex-direction: column;
    flex: 1;
    min-width: 0;
}

.list li {
    display: flex;
    align-items: center;
    flex: 1 1 0;
    min-height: 0;
    padding-left: 1px;
    white-space: nowrap;
}

.list .tree li {
    padding-left: 2px;
}

.tree svg {
    width: 12px;
    height: 11px;
    margin-right: 1px;
}

.tree .branch {
    width: 14px;
    height: 13px;
    margin-right: 0;
}

.tree span.selected {
    flex: 1;
}

.selected {
    background: #316ac5;
    color: #fff;
}

.scroll {
    display: flex;
    flex-direction: column;
    flex: none;
    width: 13px;
    background: #f6f5f0;
    color: #4d6185;
}

.scroll button {
    width: 13px;
    height: 12px;
    border: 1px solid #fff;
    border-radius: 2px;
    background: #c6d5fc;
}

.scroll button:last-child {
    margin-top: auto;
}

.scroll svg {
    width: 8px;
    height: 8px;
}

.scroll.disabled button {
    background: #efede2;
    color: #c9c7bc;
}

.thumb {
    height: 19px;
    border: 1px solid #a9bff5;
    border-radius: 2px;
    background: #c6d5fc repeating-linear-gradient(#9db5ee 0 1px, transparent 1px 2px) center / 5px 6px no-repeat;
}

.thumb.medium {
    height: 31px;
}

.thumb.long {
    height: 38px;
}

.scroll.horizontal {
    flex-direction: row;
    width: 116px;
    height: 13px;
}

.scroll.horizontal button {
    height: 13px;
    margin: 0;
}

.scroll.horizontal .thumb {
    flex: 1;
    height: 13px;
    margin-right: 3px;
    background-image: repeating-linear-gradient(to right, #9db5ee 0 1px, transparent 1px 2px);
}

.grip {
    position: absolute;
    right: 0;
    bottom: 1px;
    width: 10px;
    height: 10px;
}

/* Floating toolbox */
.toolbox {
    position: absolute;
    left: 556px;
    top: 197px;
    width: 67px;
    padding: 3px 2px;
    border: 1px solid;
    border-color: #fff #55534a #55534a #fff;
    background: #ece9d8;
}

.toolbox-title {
    display: flex;
    align-items: center;
    height: 16px;
    gap: 3px;
    padding: 0 1px 0 3px;
    background: #0a54e0;
    color: #fff;
}

.toolbox-title h2 {
    flex: 1;
    min-width: 0;
    overflow: hidden;
    white-space: nowrap;
    font-weight: bold;
}

.toolbox-title svg {
    width: 7px;
    height: 7px;
}

.toolbox-title button {
    width: 12px;
    height: 14px;
    background: #ece9d8;
    color: #111;
}

.toolbox-title button svg {
    width: 9px;
    height: 9px;
}

.toolbox-modes {
    display: flex;
    padding: 3px 3px 1px;
    border-bottom: 1px solid #aca899;
}

.toolbox-modes button {
    width: 18px;
    height: 17px;
}

.toolbox-modes svg,
.toolbox-grid svg {
    width: 13px;
    height: 13px;
}

.toolbox-grid {
    display: grid;
    grid-template-columns: repeat(3, 1fr);
    grid-auto-rows: 18px;
    padding: 3px;
}

.toolbox-grid .glyph {
    font-size: 10px;
    font-weight: bold;
}

.toolbox-grid .serif {
    font-family: "Liberation Serif", serif;
    font-size: 11px;
    font-style: italic;
}
```
